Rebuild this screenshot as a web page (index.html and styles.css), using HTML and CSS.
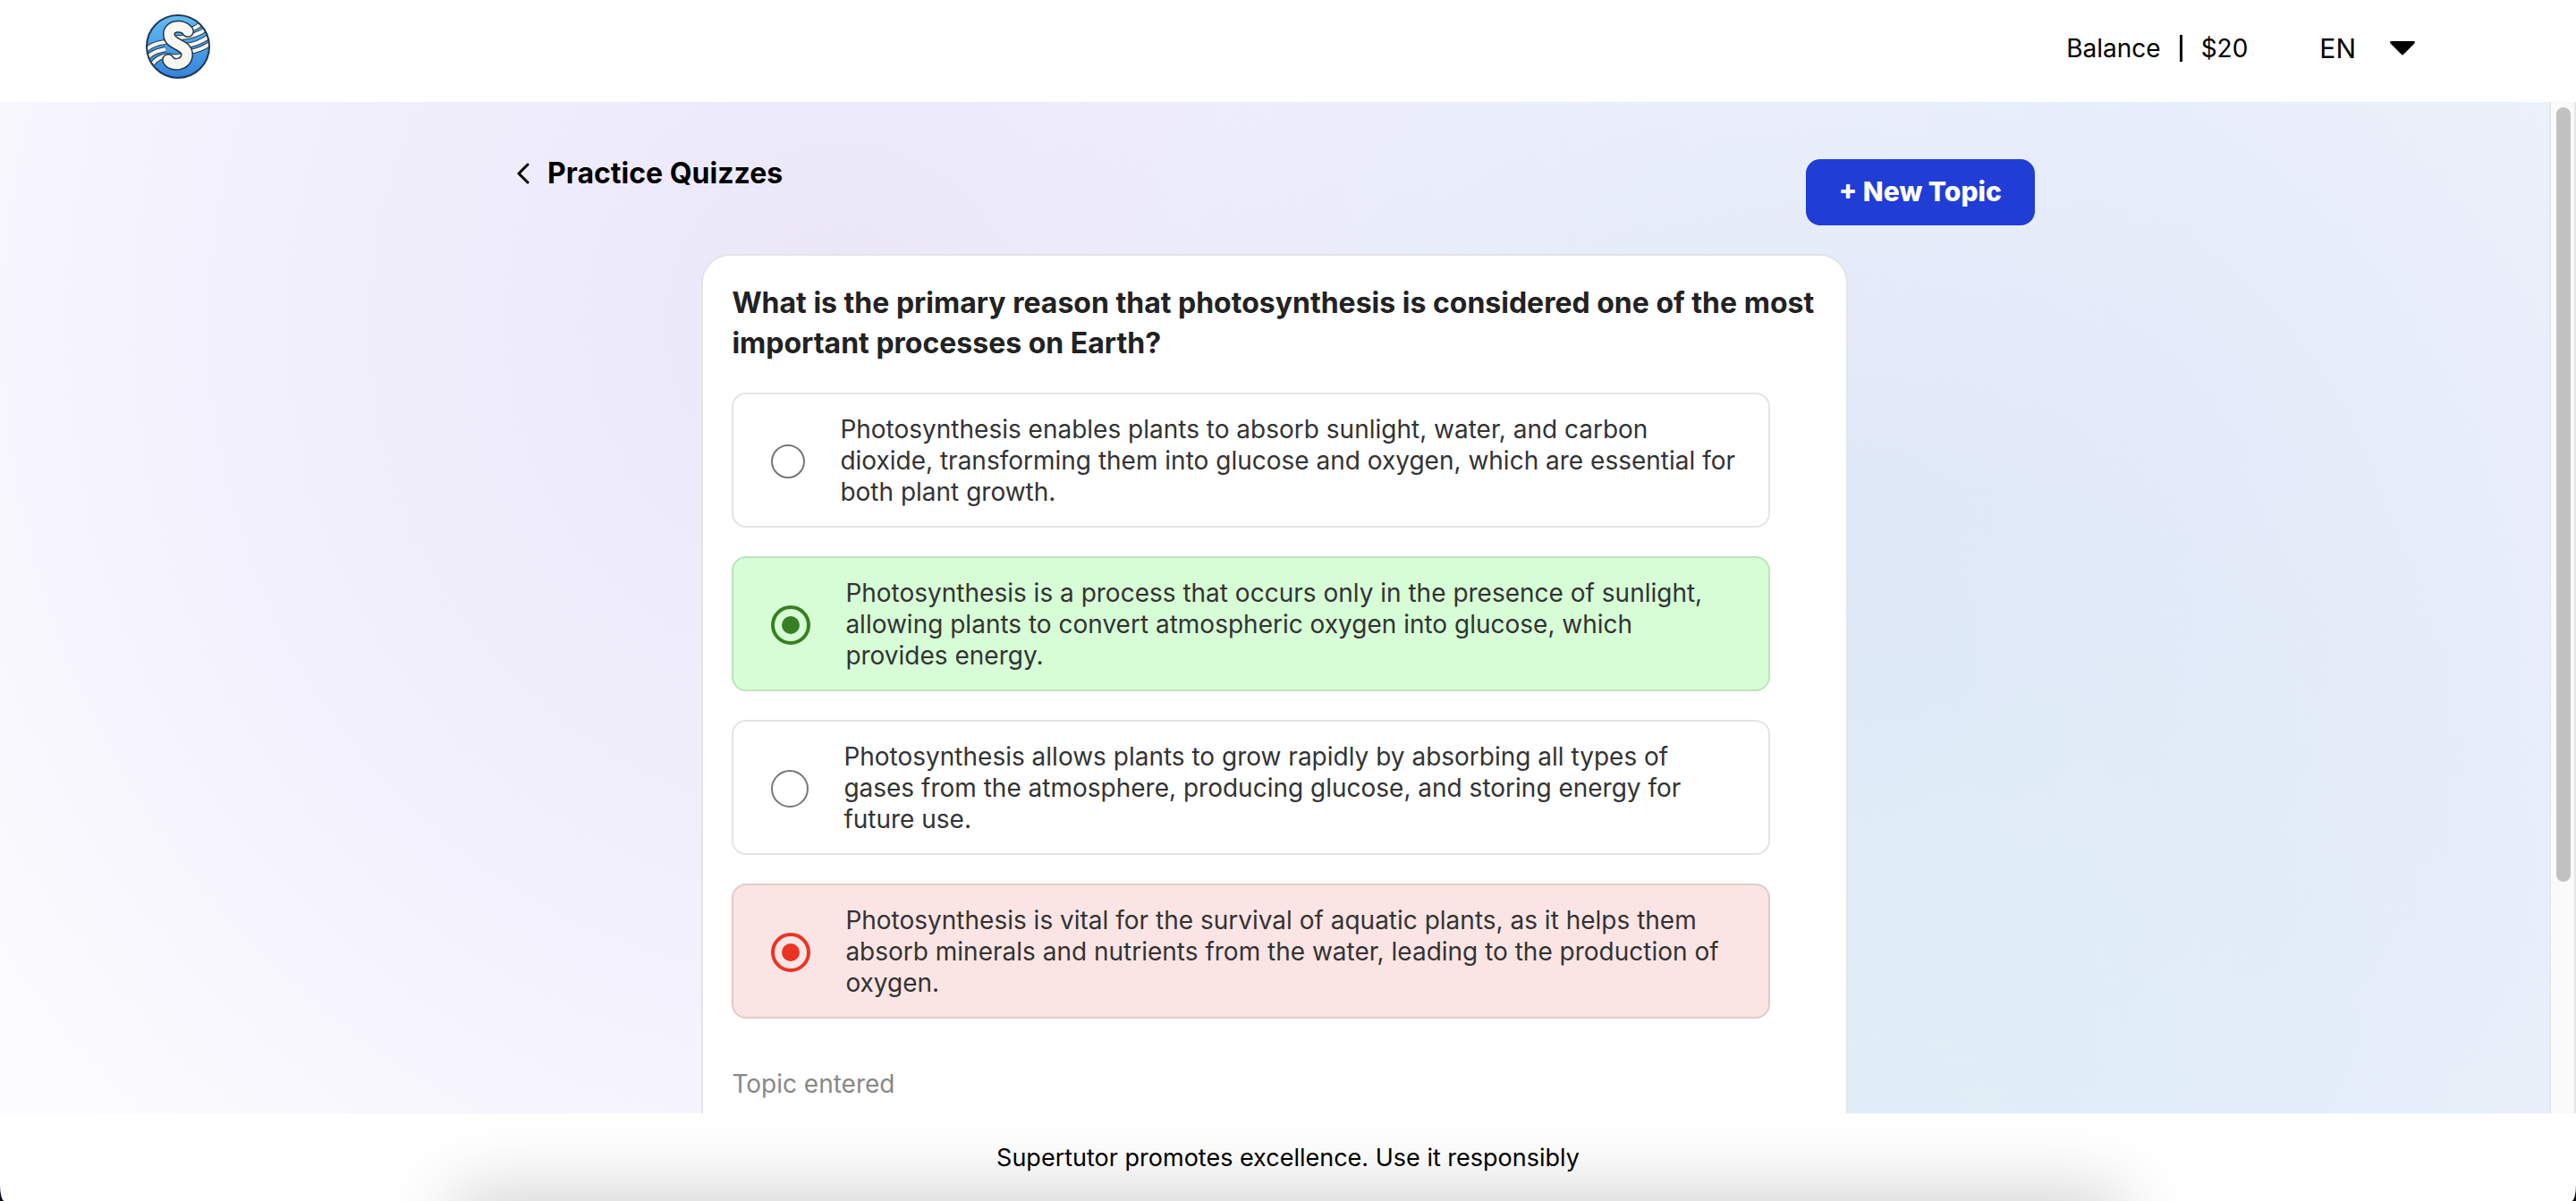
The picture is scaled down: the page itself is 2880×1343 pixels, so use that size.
FILE: index.html
```html
<!DOCTYPE html>
<html lang="en">
<head>
<meta charset="utf-8">
<title>Practice Quizzes</title>
<link rel="stylesheet" href="styles.css">
</head>
<body>
<header class="topbar">
  <a class="brand" href="#" aria-label="Supertutor home">
    <svg class="logo" viewBox="0 0 72 72" aria-hidden="true">
      <defs>
        <linearGradient id="sea" x1="0" y1="0" x2="0" y2="1">
          <stop offset="0" stop-color="#62bdf4"/>
          <stop offset="1" stop-color="#3583dc"/>
        </linearGradient>
        <clipPath id="disc"><circle cx="36" cy="36" r="35"/></clipPath>
      </defs>
      <circle cx="36" cy="36" r="35" fill="url(#sea)"/>
      <g clip-path="url(#disc)" fill="none">
        <g stroke="#20384f" stroke-width="6">
          <path d="M0 40C6 34 13 32 22 31M2 48C8 42 14 41 22 39M8 55C13 48 22 45 30 47C35 48 39 47 43 45"/>
          <path d="M50 17C55 16 59 13 64 9M34 26C48 27 60 22 70 15M44 35C55 34 64 30 73 23M48 42C58 41 66 37 73 32"/>
        </g>
        <g stroke="#f6f6f0" stroke-width="4">
          <path d="M0 40C6 34 13 32 22 31M2 48C8 42 14 41 22 39M8 55C13 48 22 45 30 47C35 48 39 47 43 45"/>
          <path d="M50 17C55 16 59 13 64 9M34 26C48 27 60 22 70 15M44 35C55 34 64 30 73 23M48 42C58 41 66 37 73 32"/>
        </g>
      </g>
      <circle cx="36" cy="36" r="35" fill="none" stroke="#20384f" stroke-width="2"/>
      <path d="M47 19C42 11 25 12 26 23C27 35 46 33 46 45C46 57 29 59 25 51" fill="none" stroke="#20384f" stroke-width="14" stroke-linecap="round"/>
      <path d="M47 19C42 11 25 12 26 23C27 35 46 33 46 45C46 57 29 59 25 51" fill="none" stroke="#f8f7f1" stroke-width="11" stroke-linecap="round"/>
    </svg>
  </a>
  <div class="account">
    <p class="balance"><span>Balance</span><span class="divider"></span><span>$20</span></p>
    <button class="language" type="button" aria-label="Language: EN">
      <span>EN</span>
      <svg class="caret" viewBox="0 0 28 16" aria-hidden="true"><path d="M1 0H27Q29 1 27 3L15 15Q14 16 13 15L1 3Q-1 1 1 0Z"/></svg>
    </button>
  </div>
</header>

<div class="viewport">
  <main class="page">
    <div class="page-head">
      <a class="back" href="#">
        <svg class="chevron" viewBox="0 0 14 24" aria-hidden="true"><path d="M12 2L2 12L12 22"/></svg>
        <span>Practice Quizzes</span>
      </a>
      <button class="new-topic" type="button">+ New Topic</button>
    </div>

    <form class="card">
      <fieldset class="quiz">
        <legend class="question">What is the primary reason that photosynthesis is considered one of the most important processes on Earth?</legend>
        <div class="options">
          <label class="option">
            <input class="radio radio-small" type="radio" name="a">
            <span>Photosynthesis enables plants to absorb sunlight, water, and carbon<br>dioxide, transforming them into glucose and oxygen, which are essential for<br>both plant growth.</span>
          </label>
          <label class="option correct">
            <input class="radio" type="radio" name="b" checked>
            <span>Photosynthesis is a process that occurs only in the presence of sunlight,<br>allowing plants to convert atmospheric oxygen into glucose, which<br>provides energy.</span>
          </label>
          <label class="option">
            <input class="radio" type="radio" name="c">
            <span>Photosynthesis allows plants to grow rapidly by absorbing all types of<br>gases from the atmosphere, producing glucose, and storing energy for<br>future use.</span>
          </label>
          <label class="option wrong">
            <input class="radio" type="radio" name="d" checked>
            <span>Photosynthesis is vital for the survival of aquatic plants, as it helps them<br>absorb minerals and nutrients from the water, leading to the production of<br>oxygen.</span>
          </label>
        </div>
      </fieldset>
      <p class="topic-label">Topic entered</p>
    </form>
  </main>
  <div class="scrollbar"><div class="thumb"></div></div>
</div>

<footer class="footer"><p>Supertutor promotes excellence. Use it responsibly</p></footer>
</body>
</html>
```
FILE: styles.css
```css
* { box-sizing: border-box; }
html { background: #0a0a1e; }
body {
  margin: 0;
  height: 100vh;
  display: flex;
  flex-direction: column;
  overflow: hidden;
  border-radius: 0 0 5px 5px / 0 0 18px 18px;
  background: #fff;
  color: #000;
  font-family: Inter, "Liberation Sans", sans-serif;
  font-size: 28px;
  line-height: 35px;
}
p { margin: 0; }
button { border: 0; background: none; color: inherit; font: inherit; padding: 0; }
a { color: inherit; text-decoration: none; }

.topbar {
  flex: none;
  display: flex;
  justify-content: space-between;
  align-items: center;
  padding: 16px 180px 26px 162px;
}
.brand, .logo { display: block; }
.logo { width: 74px; height: 72px; }
.account { display: flex; align-items: center; gap: 80px; padding-top: 4px; }
.balance { display: flex; align-items: center; gap: 21px; }
.divider { width: 3px; height: 30px; background: #000; }
.language { display: flex; align-items: center; gap: 38px; font-size: 30px; }
.caret { width: 28px; height: 16px; }

.viewport { flex: 1; min-height: 0; display: flex; }
.page {
  flex: 1;
  overflow: hidden;
  padding: 64px 19.9%;
  background:
    radial-gradient(ellipse 32% 75% at 74% 100%, #dfeef6 0%, #dfeef600 100%),
    radial-gradient(ellipse 38% 90% at 72% 55%, #dee6f8 10%, #dee6f800 100%),
    linear-gradient(90deg, #edf1fb00 42%, #edf1fb 85%),
    radial-gradient(ellipse 42% 110% at 33% 22%, #eae6f9 0%, #f4f2fd 65%, #fcfcfe 100%);
}
.page-head { display: flex; justify-content: space-between; align-items: flex-start; padding: 0 2px 0 5px; }
.back { display: flex; align-items: center; gap: 20px; font-size: 32px; font-weight: 700; line-height: 32px; }
.chevron { width: 14px; height: 24px; fill: none; stroke: #000; stroke-width: 3; stroke-linecap: round; stroke-linejoin: round; }
.new-topic { padding: 19px 37px 21px; border-radius: 16px; background: #203dd6; color: #fff; font-size: 30px; font-weight: 800; line-height: 34px; }

.card {
  width: 75.2%;
  margin: 32px auto 0;
  padding: 30px 85px 120px 32px;
  border: 2px solid #e4e4e7;
  border-radius: 32px;
  background: #fff;
}
.quiz { border: 0; margin: 0; padding: 0; min-width: 0; }
.question { padding: 0; margin: 0 -52px 33px 0; color: #222; font-size: 32px; font-weight: 700; line-height: 45px; }
.options { display: grid; gap: 32px; }
.option {
  display: flex;
  align-items: center;
  gap: 39px;
  padding: 22px 24px 20px 42px;
  border: 2px solid #e4e4e4;
  border-radius: 16px;
  color: #333;
}
.radio {
  appearance: none;
  flex: none;
  display: grid;
  place-items: center;
  width: 42px;
  height: 42px;
  margin: 0;
  border: 2px solid #767676;
  border-radius: 50%;
  background: #fff;
}
.radio-small { width: 38px; height: 38px; }
.radio:checked { width: 44px; height: 44px; border: 4px solid; background: none; }
.radio:checked::before { content: ""; width: 20px; height: 20px; border-radius: 50%; background: currentColor; }
.correct { background: #d7fdd6; border-color: #bce4b9; }
.correct .radio { color: #378022; }
.wrong { background: #fbe5e4; border-color: #e0cbcb; }
.wrong .radio { color: #ec3323; }
.topic-label { margin-top: 56px; color: #888; }

.scrollbar { flex: none; width: 30px; padding: 6px 4px 0 6px; border: 2px solid #e6e6e6; border-width: 0 2px; background: #fafafa; }
.thumb { width: 16px; height: 77%; border-radius: 8px; background: #c1c1c1; }

.footer {
  position: relative;
  flex: none;
  display: grid;
  place-items: center;
  height: 98px;
  overflow: hidden;
  font-size: 27px;
}
.footer::after {
  content: "";
  position: absolute;
  left: 18%;
  right: 18%;
  top: 100%;
  height: 60px;
  box-shadow: 0 0 80px 10px #00000030;
}
```
